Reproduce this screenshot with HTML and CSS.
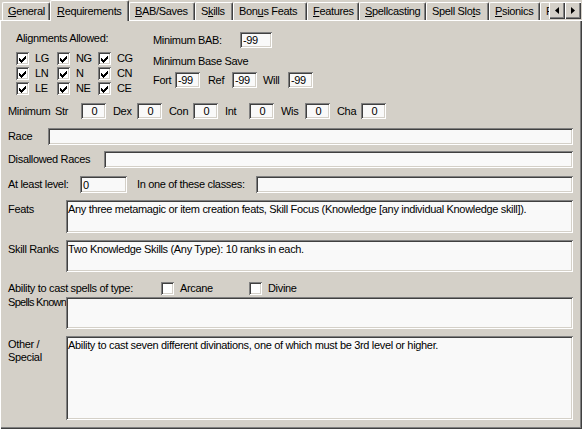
FILE: index.html
```html
<!DOCTYPE html>
<html>
<head>
<meta charset="utf-8">
<link rel="stylesheet" href="styles.css">
</head>
<body>
<div class="window">
  <div class="tabs">
    <div class="tab t-general"><u>G</u>eneral</div>
    <div class="tab sel t-req"><u>R</u>equirements</div>
    <div class="tab t-bab"><u>B</u>AB/Saves</div>
    <div class="tab t-skills">S<u>k</u>ills</div>
    <div class="tab t-bonus">Bon<u>u</u>s Feats</div>
    <div class="tab t-feat"><u>F</u>eatures</div>
    <div class="tab t-spellc"><u>S</u>pellcasting</div>
    <div class="tab t-slots">Spell Slo<u>t</u>s</div>
    <div class="tab t-psi"><u>P</u>sionics</div>
    <div class="tab t-more">F</div>
    <div class="scroller">
      <div class="sbtn"><svg width="4" height="7" viewBox="0 0 4 7"><path d="M4 0V7L0 3.5Z" fill="#000"/></svg></div>
      <div class="sbtn"><svg width="4" height="7" viewBox="0 0 4 7"><path d="M0 0V7L4 3.5Z" fill="#000"/></svg></div>
    </div>
  </div>
  <div class="panel">
    <div class="top">
      <div class="align">
        <div class="title">Alignments Allowed:</div>
        <div class="agrid">
          <div class="chk"><span class="cb"><svg viewBox="0 0 13 13" width="13" height="13"><path d="M3 6h1v3H3zM4 7h1v3H4zM5 8h1v3H5zM6 7h1v3H6zM7 6h1v3H7zM8 5h1v3H8zM9 4h1v3H9z" fill="#000"/></svg></span>LG</div>
          <div class="chk"><span class="cb"><svg viewBox="0 0 13 13" width="13" height="13"><path d="M3 6h1v3H3zM4 7h1v3H4zM5 8h1v3H5zM6 7h1v3H6zM7 6h1v3H7zM8 5h1v3H8zM9 4h1v3H9z" fill="#000"/></svg></span>NG</div>
          <div class="chk"><span class="cb"><svg viewBox="0 0 13 13" width="13" height="13"><path d="M3 6h1v3H3zM4 7h1v3H4zM5 8h1v3H5zM6 7h1v3H6zM7 6h1v3H7zM8 5h1v3H8zM9 4h1v3H9z" fill="#000"/></svg></span>CG</div>
          <div class="chk"><span class="cb"><svg viewBox="0 0 13 13" width="13" height="13"><path d="M3 6h1v3H3zM4 7h1v3H4zM5 8h1v3H5zM6 7h1v3H6zM7 6h1v3H7zM8 5h1v3H8zM9 4h1v3H9z" fill="#000"/></svg></span>LN</div>
          <div class="chk"><span class="cb"><svg viewBox="0 0 13 13" width="13" height="13"><path d="M3 6h1v3H3zM4 7h1v3H4zM5 8h1v3H5zM6 7h1v3H6zM7 6h1v3H7zM8 5h1v3H8zM9 4h1v3H9z" fill="#000"/></svg></span>N</div>
          <div class="chk"><span class="cb"><svg viewBox="0 0 13 13" width="13" height="13"><path d="M3 6h1v3H3zM4 7h1v3H4zM5 8h1v3H5zM6 7h1v3H6zM7 6h1v3H7zM8 5h1v3H8zM9 4h1v3H9z" fill="#000"/></svg></span>CN</div>
          <div class="chk"><span class="cb"><svg viewBox="0 0 13 13" width="13" height="13"><path d="M3 6h1v3H3zM4 7h1v3H4zM5 8h1v3H5zM6 7h1v3H6zM7 6h1v3H7zM8 5h1v3H8zM9 4h1v3H9z" fill="#000"/></svg></span>LE</div>
          <div class="chk"><span class="cb"><svg viewBox="0 0 13 13" width="13" height="13"><path d="M3 6h1v3H3zM4 7h1v3H4zM5 8h1v3H5zM6 7h1v3H6zM7 6h1v3H7zM8 5h1v3H8zM9 4h1v3H9z" fill="#000"/></svg></span>NE</div>
          <div class="chk"><span class="cb"><svg viewBox="0 0 13 13" width="13" height="13"><path d="M3 6h1v3H3zM4 7h1v3H4zM5 8h1v3H5zM6 7h1v3H6zM7 6h1v3H7zM8 5h1v3H8zM9 4h1v3H9z" fill="#000"/></svg></span>CE</div>
        </div>
      </div>
      <div class="saves">
        <div class="babrow"><span class="l-bab">Minimum BAB:</span><span class="field f-bab">-99</span></div>
        <div class="title2">Minimum Base Save</div>
        <div class="saverow">
          <span class="l-fort">Fort</span><span class="field f-save">-99</span>
          <span class="l-ref">Ref</span><span class="field f-save">-99</span>
          <span class="l-will">Will</span><span class="field f-save">-99</span>
        </div>
      </div>
    </div>

    <div class="stats">
      <span class="l-min">Minimum</span><span class="l-str">Str</span><span class="field f-stat">0</span>
      <span class="l-stat">Dex</span><span class="field f-stat">0</span>
      <span class="l-stat">Con</span><span class="field f-stat">0</span>
      <span class="l-stat">Int</span><span class="field f-stat">0</span>
      <span class="l-stat">Wis</span><span class="field f-stat">0</span>
      <span class="l-stat">Cha</span><span class="field f-stat">0</span>
    </div>

    <div class="row r-race"><span class="l-race">Race</span><span class="field grow"></span></div>
    <div class="row r-dis"><span class="l-dis">Disallowed Races</span><span class="field grow"></span></div>
    <div class="row r-lvl"><span class="l-lvl">At least level:</span><span class="field f-lvl">0</span><span class="l-cls">In one of these classes:</span><span class="field grow"></span></div>

    <div class="area a-feats"><span class="alabel">Feats</span><div class="field grow memo">Any three metamagic or item creation feats, Skill Focus (Knowledge [any individual Knowledge skill]).</div></div>
    <div class="area a-skill"><span class="alabel">Skill Ranks</span><div class="field grow memo">Two Knowledge Skills (Any Type): 10 ranks in each.</div></div>

    <div class="ability">
      <span class="l-abil">Ability to cast spells of type:</span>
      <div class="chk c-arc"><span class="cb"></span>Arcane</div>
      <div class="chk"><span class="cb"></span>Divine</div>
    </div>

    <div class="area a-known"><span class="alabel">Spells Known</span><div class="field grow memo"></div></div>
    <div class="area a-other"><span class="alabel">Other /<br>Special</span><div class="field grow memo">Ability to cast seven different divinations, one of which must be 3rd level or higher.</div></div>
  </div>
</div>
</body>
</html>
```
FILE: styles.css
```css
html, body {
  margin: 0;
  padding: 0;
  background: #d4d0c8;
}
.window {
  width: 582px;
  height: 429px;
  font-family: "Liberation Sans", Arial, sans-serif;
  font-size: 11px;
  line-height: 13px;
  letter-spacing: -0.33px;
  color: #000;
  overflow: hidden;
}
u { text-decoration: underline; text-underline-offset: 1px; }

/* tabs */
.tabs {
  display: flex;
  align-items: flex-end;
  height: 20px;
  padding-left: 2px;
}
.tab {
  box-sizing: border-box;
  height: 18px;
  padding: 2px 0 0 5px;
  border-top: 1px solid #fff;
  border-left: 1px solid #fff;
  border-right: 1px solid #404040;
  box-shadow: inset -1px 0 #808080;
  border-radius: 2px 2px 0 0;
  white-space: nowrap;
  overflow: hidden;
  background: #d4d0c8;
}
.tab.sel {
  height: 21px;
  margin-bottom: -1px;
  position: relative;
  z-index: 2;
  padding-top: 4px;
  padding-left: 6px;
}
.t-general { width: 48px; }
.t-req { width: 79px; }
.t-bab { width: 66px; }
.t-skills { width: 38px; }
.t-bonus { width: 74px; }
.t-feat { width: 52px; }
.t-spellc { width: 67px; }
.t-slots { width: 63px; }
.t-psi { width: 51px; }
.t-more { width: 9px; padding-left: 5px; border-right: none; box-shadow: none; border-radius: 2px 0 0 0; }
.scroller {
  display: flex;
  align-self: flex-start;
  margin-top: 2px;
}
.sbtn {
  box-sizing: border-box;
  width: 16px;
  height: 17px;
  display: flex;
  align-items: center;
  justify-content: center;
  background: #d4d0c8;
  box-shadow: inset 1px 1px #fff, inset -1px -1px #404040, inset -2px -2px #808080;
}

/* panel */
.panel {
  box-sizing: border-box;
  height: 409px;
  padding: 0 9px 0 8px;
  box-shadow: inset 1px 1px #fff, inset -1px -1px #404040, inset -2px -2px #808080;
  display: flex;
  flex-direction: column;
}

.field {
  box-sizing: border-box;
  background: #f9f9f9;
  box-shadow: inset 1px 1px #808080, inset -1px -1px #fff, inset 2px 2px #404040, inset -2px -2px #d4d0c8;
  padding: 2px 3px 0 3px;
  white-space: nowrap;
  overflow: hidden;
}
.grow { flex: 1; }
span { white-space: nowrap; }

/* top section */
.top {
  display: flex;
  margin-top: 12px;
}
.align {
  margin-left: 8px;
  width: 137px;
}
.title { height: 13px; }
.agrid {
  margin-top: 7px;
  display: grid;
  grid-template-columns: 41px 41px auto;
  row-gap: 2px;
}
.chk {
  display: flex;
  align-items: center;
  height: 13px;
}
.cb {
  width: 13px;
  height: 13px;
  flex: none;
  margin-right: 6px;
  background: #fff;
  box-shadow: inset 1px 1px #808080, inset -1px -1px #fff, inset 2px 2px #404040, inset -2px -2px #d4d0c8;
}
.cb svg { display: block; }

.babrow { display: flex; align-items: center; height: 16px; }
.l-bab { width: 87px; padding-top: 1px; }
.f-bab { width: 32px; height: 16px; }
.title2 { margin-top: 7px; height: 13px; }
.saverow { margin-top: 4px; display: flex; align-items: center; height: 16px; }
.l-fort { width: 22px; }
.l-ref { width: 24px; padding-left: 8px; }
.l-will { width: 25px; padding-left: 6px; }
.f-save { width: 25px; height: 16px; }

/* stats */
.stats {
  margin-top: 8px;
  display: flex;
  align-items: center;
  height: 16px;
}
.l-min { width: 47px; }
.l-str { width: 26px; }
.l-stat { width: 24px; padding-left: 7px; }
.f-stat { width: 25px; height: 16px; text-align: center; padding-left: 2px; padding-right: 0; }

/* rows */
.row { display: flex; align-items: center; height: 17px; }
.row .field { height: 17px; }
.r-race { margin-top: 9px; }
.r-dis { margin-top: 6px; }
.r-lvl { margin-top: 8px; }
.l-race { width: 40px; }
.l-dis { width: 96px; }
.l-lvl { width: 72px; }
.f-lvl { width: 47px; flex: none; padding-top: 3px; }
.l-cls { width: 119px; padding-left: 10px; }

.area { display: flex; align-items: flex-start; }
.alabel { width: 58px; flex: none; }
.memo { height: 100%; padding: 3px 2px 0 2px; }
.a-feats { margin-top: 7px; height: 33px; }
.a-feats .alabel, .a-skill .alabel { padding-top: 3px; }
.a-skill { margin-top: 7px; height: 32px; }
.ability {
  margin-top: 10px;
  height: 13px;
  display: flex;
  align-items: center;
}
.l-abil { width: 153px; }
.c-arc { width: 88px; }
.a-known { margin-top: 2px; height: 32px; }
.a-known .alabel { margin-top: -1px; letter-spacing: -0.7px; }
.a-other { margin-top: 7px; height: 84px; }
.a-other .alabel { padding-top: 2px; }
.a-other .alabel { white-space: normal; }
```
